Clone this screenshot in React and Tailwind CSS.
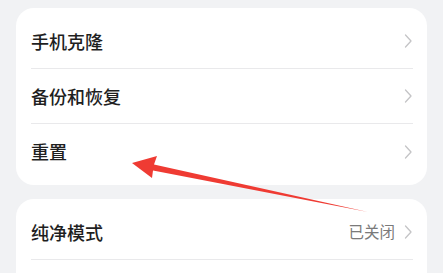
import React from "react";

const Chevron = () => (
  <svg width="9" height="14" viewBox="0 0 9 14" fill="none" className="shrink-0">
    <path d="M1.5 1 L7 7 L1.5 13" stroke="#c4c4c6" strokeWidth="1.3" strokeLinecap="round" strokeLinejoin="round" />
  </svg>
);

function Row({ label, value, divider, first, last }) {
  return (
    <div className={`flex items-center justify-between ${first ? "h-[61px] pt-[6px]" : last ? "h-[61px] pb-[6px]" : "h-[55px]"} ${divider ? "border-b border-[#e9e9eb]" : ""}`}>
      <span className="text-[18px] font-medium text-[#1f1f1f]">{label}</span>
      <div className="flex items-center gap-[9px]">
        {value && <span className="text-[15.5px] text-[#7a7a7a]">{value}</span>}
        <Chevron />
      </div>
    </div>
  );
}

export default function App() {
  return (
    <div className="relative h-[273px] w-[443px] overflow-hidden bg-[#f1f2f4] pt-[8px] font-['Noto_Sans_CJK_SC',sans-serif]">
      <div className="mx-[16px] rounded-[18px] bg-white px-[15px] pr-[14px]">
        <Row label="手机克隆" divider first />
        <Row label="备份和恢复" divider />
        <Row label="重置" last />
      </div>
      <div className="mx-[16px] mt-[14px] rounded-[18px] bg-white px-[15px] pr-[14px] pt-[6px]">
        <Row label="纯净模式" value="已关闭" divider />
        <div className="h-[40px]" />
      </div>
      <svg className="pointer-events-none absolute left-0 top-0" width="443" height="273" viewBox="0 0 443 273">
        <polygon points="132,163 157,156 154,164.5 368,212 153,170.5 152,178" fill="#ef3b33" />
      </svg>
    </div>
  );
}
